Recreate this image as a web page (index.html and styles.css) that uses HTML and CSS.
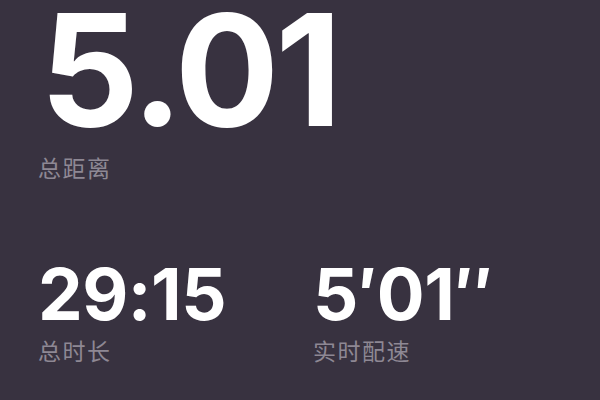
FILE: index.html
```html
<!DOCTYPE html>
<html lang="zh">
<head>
<meta charset="utf-8">
<link rel="stylesheet" href="styles.css">
</head>
<body>
<main class="screen">
  <section class="hero">
    <div class="big">5.01</div>
    <div class="label">总距离</div>
  </section>
  <section class="stats">
    <div class="stat">
      <div class="mid">29:15</div>
      <div class="label">总时长</div>
    </div>
    <div class="stat">
      <div class="mid">5′01″</div>
      <div class="label">实时配速</div>
    </div>
  </section>
</main>
</body>
</html>
```
FILE: styles.css
```css
html, body {
  margin: 0;
  padding: 0;
  background: #383240;
}
.screen {
  width: 600px;
  height: 400px;
  overflow: hidden;
  box-sizing: border-box;
  padding: 0 0 0 38px;
  font-family: Inter, "Noto Sans CJK SC", sans-serif;
  color: #ffffff;
}
.hero {
  display: flex;
  flex-direction: column;
}
.big {
  font-weight: 700;
  font-size: 155px;
  line-height: 140px;
  letter-spacing: -4px;
  padding-left: 2px;
}
.label {
  font-family: "Noto Sans CJK SC", sans-serif;
  color: #8e8894;
  font-size: 23px;
  line-height: 26px;
  letter-spacing: 1.5px;
}
.hero .label {
  margin-top: 14px;
}
.stats {
  display: flex;
  margin-top: 79px;
}
.stat {
  display: flex;
  flex-direction: column;
  width: 275px;
}
.mid {
  font-weight: 700;
  font-size: 71px;
  line-height: 70px;
  letter-spacing: -0.5px;
}
.stat .label {
  margin-top: 8px;
}
```
